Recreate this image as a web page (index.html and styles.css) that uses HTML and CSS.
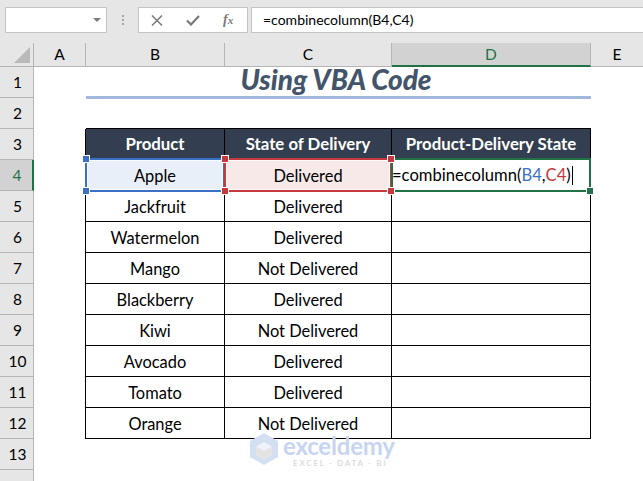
FILE: index.html
```html
<!DOCTYPE html>
<html lang="en">
<head>
<meta charset="utf-8">
<title>Using VBA Code</title>
<link rel="stylesheet" href="styles.css">
</head>
<body>
<div class="toolbar">
  <div class="namebox"><svg class="caret" width="8" height="4" viewBox="0 0 8 4"><path d="M0 0h8L4 4z" fill="#7f7f7f"/></svg></div>
  <div class="grip"><i></i><i></i><i></i></div>
  <div class="fxbox">
    <svg width="12" height="11" viewBox="0 0 12 11"><path d="M1 .5l10 10M11 .5L1 10.500" stroke="#7a7a7a" stroke-width="1.500" fill="none"/></svg>
    <svg width="14" height="11" viewBox="0 0 14 11"><path d="M1 5.500l4 4L13 1" stroke="#7a7a7a" stroke-width="2.200" fill="none"/></svg>
    <span class="fx">f<sub>x</sub></span>
  </div>
  <div class="formula">=combinecolumn(B4,C4)</div>
</div>
<div class="sheet">
  <div class="corner"><svg width="16" height="16" viewBox="0 0 16 16"><path d="M16 0v16H0z" fill="#b9b9b9"/></svg></div>
  <div class="colh">A</div><div class="colh">B</div><div class="colh">C</div><div class="colh colh-on">D</div><div class="colh colh-last">E</div>

  <div class="rowh">1</div><div class="c"></div><div class="title">Using VBA Code</div><div class="c"></div>
  <div class="rowh">2</div><div class="c"></div><div class="c top"></div><div class="c top"></div><div class="c top"></div><div class="c"></div>

  <div class="rowh">3</div><div class="c edge"></div><div class="c th">Product</div><div class="c th">State of Delivery</div><div class="c th">Product-Delivery State</div><div class="c"></div>

  <div class="rowh rowh-on">4</div><div class="c edge"></div>
  <div class="c td ref-b">Apple<span class="sel sel-b"></span><b class="h hb tl"></b><b class="h hb bl"></b></div>
  <div class="c td ref-c">Delivered<span class="sel sel-c"></span><b class="h hc tl"></b><b class="h hc tr"></b><b class="h hc bl"></b><b class="h hc br"></b></div>
  <div class="c td edit">=combinecolumn(<span class="blue">B4</span>,<span class="red">C4</span>)<span class="cursor"></span><span class="sel sel-d"></span><b class="h hd br"></b></div>
  <div class="c"></div>

  <div class="rowh">5</div><div class="c edge"></div><div class="c td">Jackfruit</div><div class="c td">Delivered</div><div class="c td"></div><div class="c"></div>
  <div class="rowh">6</div><div class="c edge"></div><div class="c td">Watermelon</div><div class="c td">Delivered</div><div class="c td"></div><div class="c"></div>
  <div class="rowh">7</div><div class="c edge"></div><div class="c td">Mango</div><div class="c td">Not Delivered</div><div class="c td"></div><div class="c"></div>
  <div class="rowh">8</div><div class="c edge"></div><div class="c td">Blackberry</div><div class="c td">Delivered</div><div class="c td"></div><div class="c"></div>
  <div class="rowh">9</div><div class="c edge"></div><div class="c td">Kiwi</div><div class="c td">Not Delivered</div><div class="c td"></div><div class="c"></div>
  <div class="rowh">10</div><div class="c edge"></div><div class="c td">Avocado</div><div class="c td">Delivered</div><div class="c td"></div><div class="c"></div>
  <div class="rowh">11</div><div class="c edge"></div><div class="c td">Tomato</div><div class="c td">Delivered</div><div class="c td"></div><div class="c"></div>
  <div class="rowh">12</div><div class="c edge"></div><div class="c td">Orange</div><div class="c td">Not Delivered</div><div class="c td"></div><div class="c"></div>
  <div class="rowh">13</div><div class="c"></div><div class="c"></div><div class="c"></div><div class="c"></div><div class="c"></div>
  <div class="rowh"></div>
</div>
<div class="watermark">
  <svg width="28" height="32" viewBox="0 0 28 32"><path d="M14 0l14 8v16l-14 8L0 24V8z" fill="#d5dff2"/><path d="M14 9l8 4.500v9L14 27l-8-4.500v-9z" fill="#e3e3e3"/><path d="M14 9l8 4.500-8 4.500-8-4.500z" fill="#eef2fa"/></svg>
  <div class="wm-text"><div class="wm-name">exceldemy</div><div class="wm-sub">EXCEL · DATA · BI</div></div>
</div>
</body>
</html>
```
FILE: styles.css
```css
* { box-sizing: border-box; }
html, body { margin: 0; height: 100%; overflow: hidden; }
body { width: 643px; height: 481px; position: relative; background: #fff; font-family: Lato, "Liberation Sans", sans-serif; color: #000; }

.toolbar { height: 43px; background: #e6e6e6; display: flex; align-items: flex-start; padding: 7px 0 0 5px; }
.namebox, .fxbox, .formula { height: 26px; background: #fff; border: 1px solid #c4c4c4; }
.namebox { width: 102px; display: flex; align-items: center; justify-content: flex-end; padding-right: 5px; }
.grip { width: 31px; height: 26px; display: flex; flex-direction: column; align-items: center; justify-content: center; gap: 2px; }
.grip i { width: 2px; height: 2px; background: #a6a6a6; }
.fxbox { width: 110px; display: flex; align-items: center; padding-left: 12px; gap: 23px; }
.fx { font-family: "Liberation Serif", serif; font-style: italic; font-weight: bold; font-size: 14px; color: #7a7a7a; line-height: 1; }
.fx sub { font-size: 11px; vertical-align: baseline; }
.formula { margin-left: 3px; flex: 1; border-right: 0; padding-left: 11px; font-size: 14px; line-height: 24px; }

.sheet { display: grid; grid-template-columns: 34px 52px 139px 167px 199px 52px; grid-template-rows: 24px repeat(14, 31px); }
.corner { background: #e6e6e6; border-right: 1px solid #b5b5b5; border-bottom: 1px solid #b5b5b5; display: flex; align-items: flex-end; justify-content: flex-end; padding: 0 3px 3px 0; }
.colh { background: #e6e6e6; border-right: 1px solid #b5b5b5; border-bottom: 1px solid #b5b5b5; font-size: 15.500px; text-align: center; line-height: 23px; }
.colh-on { background: #d2d2d2; color: #217346; border-bottom: 2px solid #217346; }
.colh-last { border-right: 0; }
.rowh { background: #e6e6e6; border-right: 1px solid #b5b5b5; border-bottom: 1px solid #b5b5b5; font-size: 15.500px; display: flex; align-items: center; justify-content: center; padding-left: 2px; }
.rowh-on { background: #d2d2d2; color: #217346; border-right: 2px solid #217346; }

.c { min-width: 0; }
.edge { border-right: 1px solid #000; }
.top { border-bottom: 1px solid #000; }
.title { grid-column: span 3; border-bottom: 2px solid #a3b8de; box-shadow: 0 1px 0 #a3b8de; padding-right: 5px; text-align: center; font-size: 28px; font-weight: 900; font-style: italic; color: #44546a; line-height: 24px; white-space: nowrap; }
.th, .td { border-right: 1px solid #000; border-bottom: 1px solid #000; font-size: 16.400px; display: flex; align-items: center; justify-content: center; white-space: nowrap; }
.th { background: #333f50; color: #fff; font-weight: 700; font-size: 16.800px; padding-bottom: 2px; }

.td { position: relative; }
.ref-b { background: #e9eff9; }
.ref-c { background: #f8e9e9; }
.edit { justify-content: flex-start; padding-left: 0; font-size: 16.600px; }
.blue { color: #3a70c6; }
.red { color: #c5393f; }
.cursor { width: 1px; height: 19px; background: #000; margin-left: 1px; }
.sel { position: absolute; top: -2px; left: -1px; right: -1px; bottom: -2px; border: 2px solid; box-shadow: inset 0 0 0 1px rgba(255, 255, 255, 0.700); pointer-events: none; }
.sel-b { border-color: #3a70c6; }
.sel-c { border-color: #c5393f; }
.sel-d { border-color: #217346; box-shadow: none; }
.h { position: absolute; width: 6px; height: 6px; z-index: 2; box-shadow: 0 0 0 1px #fff; }
.hb { background: #3a70c6; }
.hc { background: #c5393f; }
.hd { background: #217346; }
.tl { top: -4px; left: -3px; }
.bl { bottom: -4px; left: -3px; }
.tr { top: -4px; right: -3px; }
.br { bottom: -4px; right: -3px; }

.watermark { position: absolute; left: 250px; top: 433px; display: flex; gap: 5px; }
.wm-text { margin-top: 3px; }
.wm-name { font-size: 24px; font-weight: 700; color: #c8d5f0; line-height: 19px; letter-spacing: -0.200px; }
.wm-sub { font-size: 8px; font-weight: 700; letter-spacing: 1.800px; color: #dcdcdc; margin: 3px 0 0 10px; white-space: nowrap; }
```
